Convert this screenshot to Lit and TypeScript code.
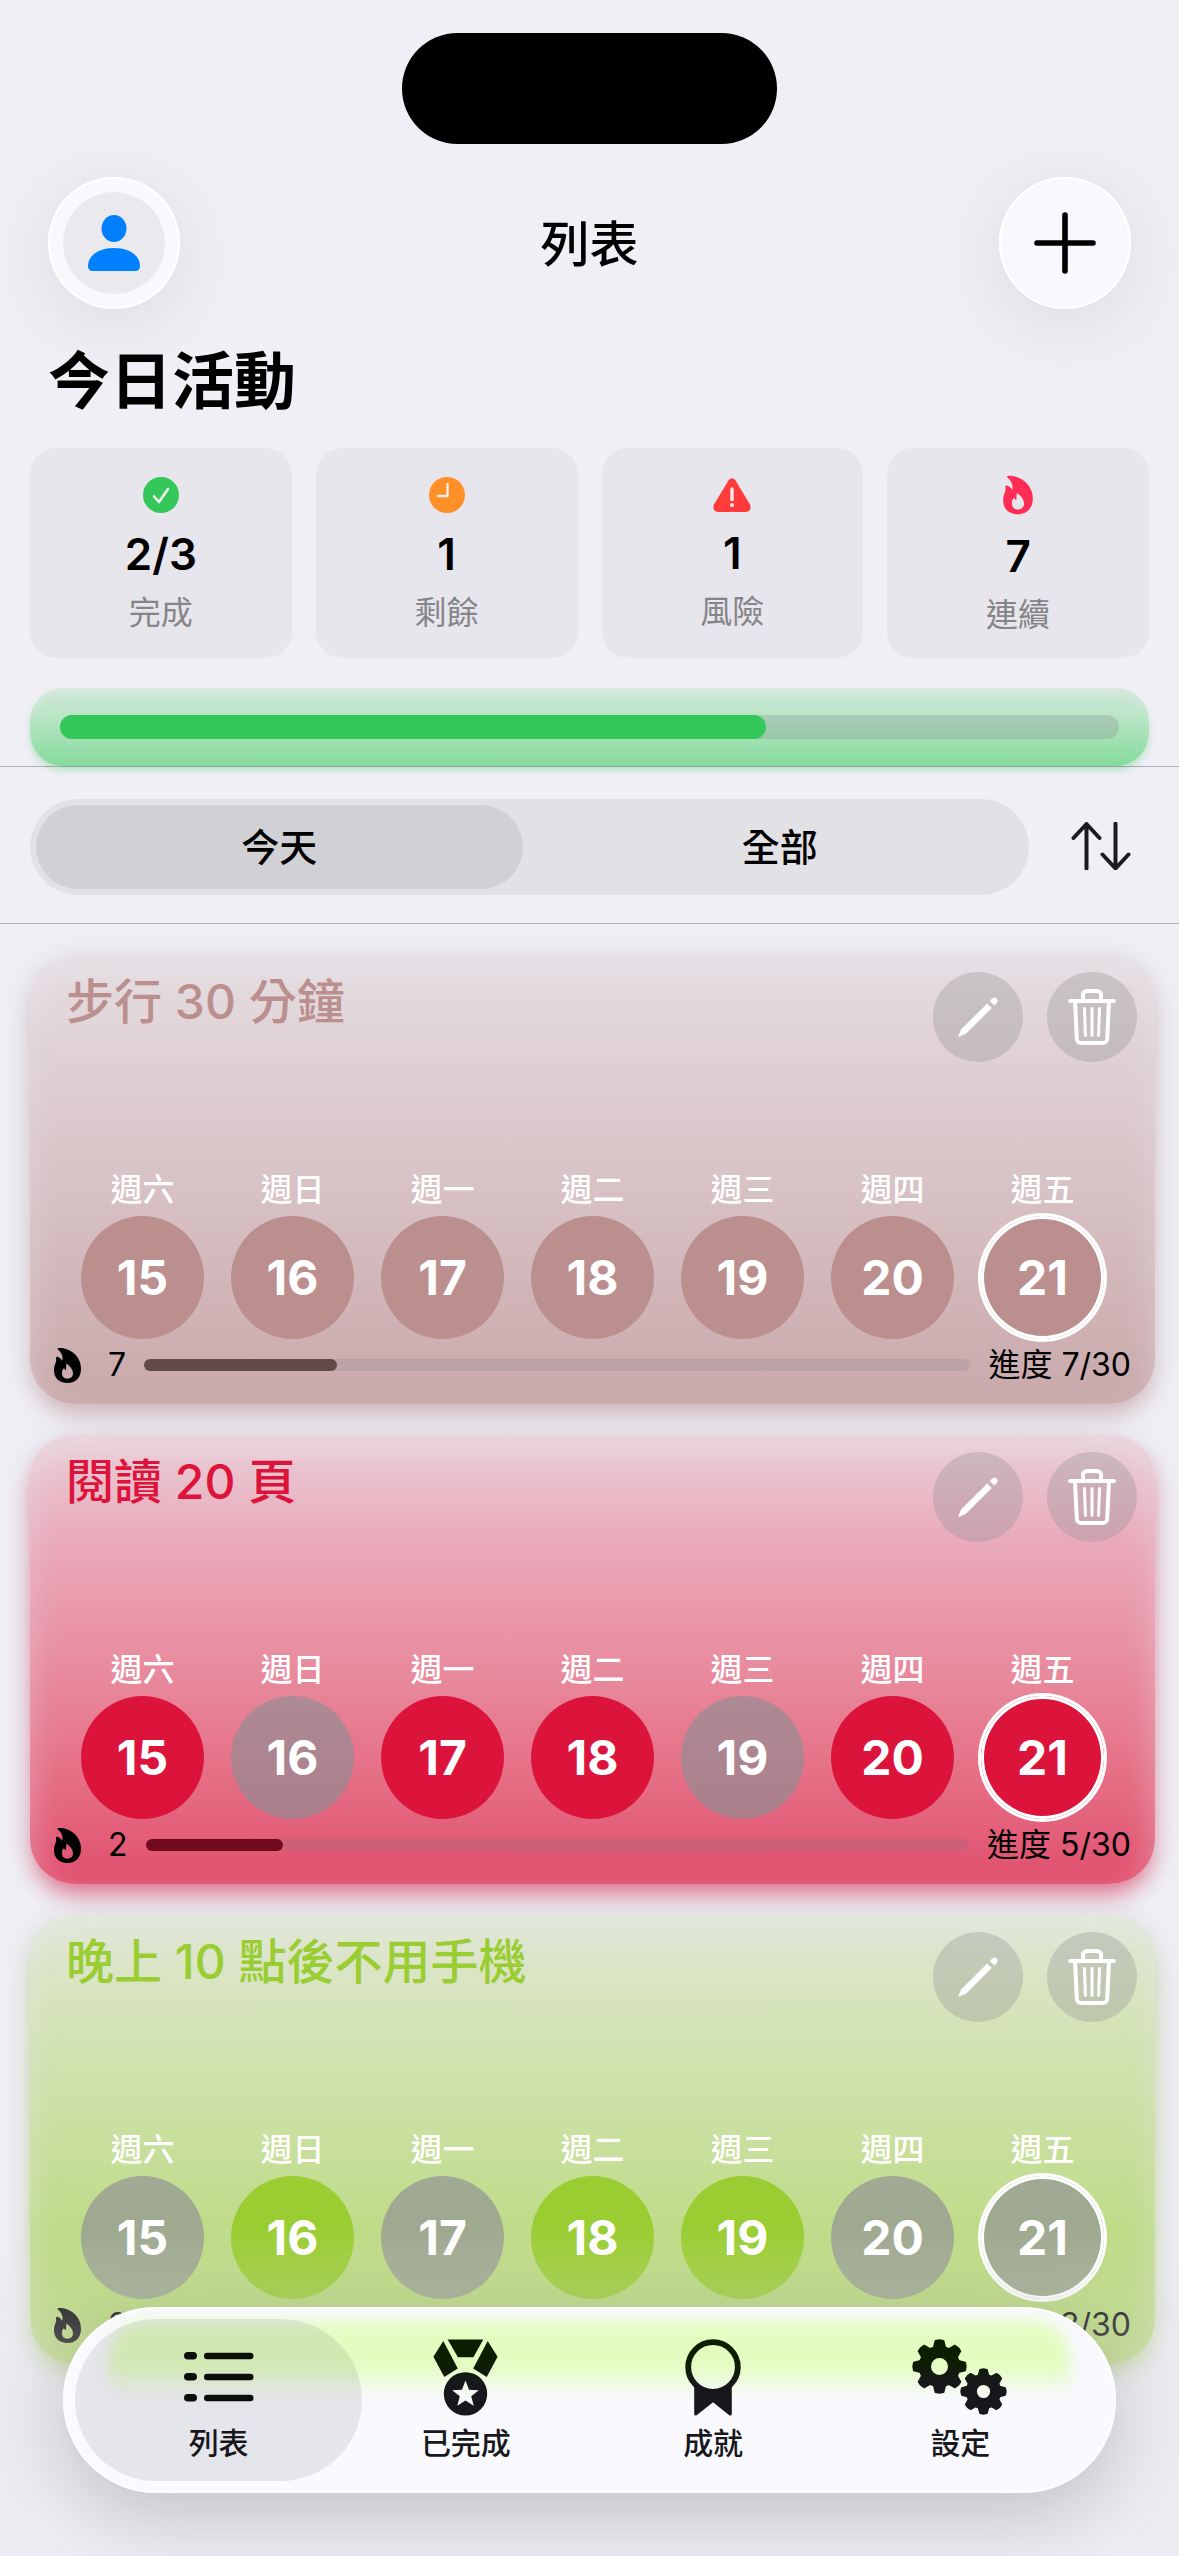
import { LitElement, html, css, svg, nothing } from "lit";
import { customElement, property, state } from "lit/decorators.js";
import { classMap } from "lit/directives/class-map.js";
import { styleMap } from "lit/directives/style-map.js";

interface Habit {
  title: string;
  tint: string;
  streak: number;
  done: number;
  goal: number;
  days: boolean[];
}

const WEEK = [
  { name: "週六", date: 15 },
  { name: "週日", date: 16 },
  { name: "週一", date: 17 },
  { name: "週二", date: 18 },
  { name: "週三", date: 19 },
  { name: "週四", date: 20 },
  { name: "週五", date: 21 },
];

const HABITS: Habit[] = [
  {
    title: "步行 30 分鐘",
    tint: "#bc8f8f",
    streak: 7,
    done: 7,
    goal: 30,
    days: [true, true, true, true, true, true, true],
  },
  {
    title: "閱讀 20 頁",
    tint: "#dc143c",
    streak: 2,
    done: 5,
    goal: 30,
    days: [true, false, true, true, false, true, true],
  },
  {
    title: "晚上 10 點後不用手機",
    tint: "#9acd32",
    streak: 2,
    done: 3,
    goal: 30,
    days: [false, true, false, true, true, false, false],
  },
];

/** Outline of an eight-toothed gear with a round hole. */
function gear(cx: number, cy: number, outer: number, root: number, hole: number): string {
  const at = (r: number, deg: number) => {
    const a = (deg * Math.PI) / 180;
    return `${(cx + r * Math.cos(a)).toFixed(2)} ${(cy + r * Math.sin(a)).toFixed(2)}`;
  };
  const pts: string[] = [];
  for (let i = 0; i < 8; i++) {
    const c = i * 45;
    pts.push(at(root, c - 17), at(outer, c - 9), at(outer + 0.4, c), at(outer, c + 9), at(root, c + 17));
  }
  return (
    `M${pts.join("L")}Z` +
    `M${cx + hole} ${cy}A${hole} ${hole} 0 1 0 ${cx - hole} ${cy}A${hole} ${hole} 0 1 0 ${cx + hole} ${cy}Z`
  );
}

function star(cx: number, cy: number, outer: number, inner: number): string {
  const pts: string[] = [];
  for (let i = 0; i < 10; i++) {
    const r = i % 2 ? inner : outer;
    const a = -Math.PI / 2 + (i * Math.PI) / 5;
    pts.push(`${(cx + r * Math.cos(a)).toFixed(2)} ${(cy + r * Math.sin(a)).toFixed(2)}`);
  }
  return `M${pts.join("L")}Z`;
}

const flamePath = svg`<path fill="currentColor" fill-rule="evenodd"
  d="M12 1C18 -1 30 1 38 4C64 12 81 36 81 62C81 90 63 105 40 105C16 105 0 90 0 67C0 48 9 44 6 31C6 25 12 26 16 29C20 31 23 35 24 39C29 27 22 13 13 6C10 3 10 2 12 1ZM38 47C47 53 57 64 57 76C57 86 50 92 40 92C30 92 24 86 24 76C24 68 26 63 30 61C32 62 32 66 35 67C38 62 35 52 38 47Z"/>`;

const icons = {
  check: html`<svg width="36" height="36" viewBox="0 0 36 36" aria-hidden="true">
    <circle cx="18" cy="18" r="18" fill="#34c759" />
    <path d="M11 19.5L16 25L25 12" fill="none" stroke="#eef3ef" stroke-width="2.6" stroke-linecap="round" stroke-linejoin="round" />
  </svg>`,
  clock: html`<svg width="36" height="36" viewBox="0 0 36 36" aria-hidden="true">
    <circle cx="18" cy="18" r="18" fill="#ff9028" />
    <path d="M18.5 7V19H9" fill="none" stroke="#f3ece8" stroke-width="2.4" stroke-linecap="round" stroke-linejoin="round" />
  </svg>`,
  warning: html`<svg width="38" height="34" viewBox="0 0 38 34" aria-hidden="true">
    <path d="M15.6 2.2Q19 -1.8 22.4 2.2L37 26.5Q39 33.2 33 34H5Q-1 33.2 1 26.5Z" fill="#ff3b3b" />
    <path d="M19 11V21.5" stroke="#f0e8ea" stroke-width="3.4" stroke-linecap="round" />
    <circle cx="19" cy="27" r="2.1" fill="#f0e8ea" />
  </svg>`,
  flame: html`<svg width="30" height="40" viewBox="0 -2 81 109" aria-hidden="true">${flamePath}</svg>`,
  smallFlame: html`<svg width="27" height="35" viewBox="0 0 81 105" aria-hidden="true">${flamePath}</svg>`,
  person: html`<svg width="52" height="56" viewBox="0 0 52 56" aria-hidden="true">
    <ellipse cx="26" cy="13.5" rx="12.5" ry="13.5" fill="#0080ff" />
    <path d="M26 33C42 33 52 41 52 51Q52 56 47 56H5Q0 56 0 51C0 41 10 33 26 33Z" fill="#0080ff" />
  </svg>`,
  plus: html`<svg width="62" height="62" viewBox="0 0 62 62" aria-hidden="true">
    <path d="M31 3V59M3 31H59" stroke="#000" stroke-width="5.6" stroke-linecap="round" />
  </svg>`,
  sort: html`<svg width="60" height="48" viewBox="0 0 60 48" aria-hidden="true">
    <path d="M15.5 46.5V2.5M2.5 16L15.5 2L28.5 16M44.5 1.5V46M31.5 32.5L44.5 46.5L57.5 32.5" fill="none" stroke="#1c1c1e" stroke-width="4" stroke-linecap="round" stroke-linejoin="round" />
  </svg>`,
  pencil: html`<svg width="40" height="40" viewBox="0 0 40 40" aria-hidden="true">
    <path d="M29.2 6.4L33.8 11L8 36.8L1.2 39.8Q0 40 0.3 38.8L3.3 32.2Z" fill="#fff" />
    <path d="M31.8 4Q35.2 -1.4 38.7 1.4Q41.6 4.6 36.2 8.4Z" fill="#fff" />
  </svg>`,
  trash: html`<svg width="48" height="56" viewBox="0 0 48 56" fill="none" stroke="#fff" stroke-linecap="round" stroke-linejoin="round" aria-hidden="true">
    <path d="M2 12H46M15 12V6.5Q15 2 19.5 2H28.5Q33 2 33 6.5V12M7 12L8.8 49.5Q9 54 13.5 54H34.5Q39 54 39.2 49.5L41 12" stroke-width="4" />
    <path d="M16.5 19.5L17.4 46.5M24 19.5V46.5M31.5 19.5L30.6 46.5" stroke-width="3" />
  </svg>`,
  list: html`<svg width="70" height="50" viewBox="0 0 70 50" aria-hidden="true">
    ${[4, 25, 46].map(
      (y) => svg`<rect x="0" y=${y - 4} width="13" height="7.6" rx="3.8" fill="#0a0f0a"/><rect x="20" y=${y - 3.2} width="49.5" height="6.4" rx="3.2" fill="#0a0f0a"/>`,
    )}
  </svg>`,
  medal: html`<svg width="65" height="77" viewBox="0 0 65 77" fill="url(#ink)" aria-hidden="true">
    <defs><linearGradient id="ink" gradientUnits="userSpaceOnUse" x1="0" y1="22" x2="0" y2="44"><stop offset="0" stop-color="#0c1e00" /><stop offset="1" stop-color="#18181c" /></linearGradient></defs>
    <path d="M14.7 0.5H50.3L40.4 18.2H24.9ZM10.3 2L0.4 17.8L11.3 38L24.8 29.6ZM54.7 2L64.6 17.8L53.7 38L40.2 29.6Z" />
    <path fill-rule="evenodd" d="M54.2 54.9A21.7 21.7 0 1 0 10.8 54.9A21.7 21.7 0 1 0 54.2 54.9Z${star(32.5, 55.5, 14, 6)}" />
  </svg>`,
  ribbon: html`<svg width="56" height="77" viewBox="0 0 56 77" aria-hidden="true">
    <defs><linearGradient id="ink2" gradientUnits="userSpaceOnUse" x1="0" y1="22" x2="0" y2="44"><stop offset="0" stop-color="#0c1e00" /><stop offset="1" stop-color="#18181c" /></linearGradient></defs>
    <circle cx="28" cy="28" r="24.8" fill="none" stroke="url(#ink2)" stroke-width="5.8" />
    <path d="M9.2 46Q28 61 46.8 46V75Q46.4 77.4 44 76L28 63.2L12 76Q9.6 77.4 9.2 75Z" fill="#18181c" />
  </svg>`,
  gears: html`<svg width="96" height="77" viewBox="0 0 96 77" aria-hidden="true">
    <defs><linearGradient id="ink3" gradientUnits="userSpaceOnUse" x1="0" y1="22" x2="0" y2="44"><stop offset="0" stop-color="#0c1e00" /><stop offset="1" stop-color="#18181c" /></linearGradient></defs>
    <path d="${gear(27.5, 27.5, 26, 20, 9.3)}${gear(71.5, 52.5, 22, 17, 7.4)}" fill="url(#ink3)" fill-rule="evenodd" stroke="url(#ink3)" stroke-width="1.6" stroke-linejoin="round" />
  </svg>`,
};

const base = css`
  *,
  *::before,
  *::after {
    box-sizing: border-box;
  }
  button {
    font: inherit;
    color: inherit;
    border: 0;
    padding: 0;
    margin: 0;
    background: none;
    cursor: pointer;
  }
  svg {
    display: block;
    flex: none;
  }
`;

@customElement("habit-card")
export class HabitCard extends LitElement {
  @property({ attribute: false }) habit!: Habit;

  static styles = [
    base,
    css`
      :host {
        display: block;
      }
      .card {
        border-radius: 45px;
        padding: 18px 0 15px;
        background: linear-gradient(
          color-mix(in srgb, var(--tint) 13%, #ebeaee),
          color-mix(in srgb, var(--tint) 32%, #efeef4) 25%,
          color-mix(in srgb, var(--tint) 73%, #efeef4)
        );
        box-shadow:
          0 14px 24px -6px color-mix(in srgb, var(--tint) 60%, transparent),
          0 4px 36px rgba(0, 0, 0, 0.08),
          inset 0 14px 32px rgba(236, 236, 244, 0.4);
      }
      .top {
        display: flex;
        align-items: flex-start;
        gap: 24px;
        padding: 0 18px 0 36px;
      }
      .title {
        flex: 1;
        margin: 0;
        font-size: 48px;
        line-height: 60px;
        font-weight: 500;
        color: var(--tint);
      }
      .action {
        width: 90px;
        height: 90px;
        border-radius: 50%;
        background: rgba(142, 142, 147, 0.32);
        display: grid;
        place-items: center;
      }
      .week {
        list-style: none;
        margin: 108px 0 0;
        padding: 0 51px;
        display: flex;
        justify-content: space-between;
        color: #fff;
      }
      .day {
        display: flex;
        flex-direction: column;
        align-items: center;
        gap: 6px;
      }
      .name {
        font-size: 32px;
        line-height: 40px;
        font-weight: 500;
      }
      .date {
        width: 123px;
        height: 123px;
        border-radius: 50%;
        background: rgba(142, 142, 147, 0.65);
        display: grid;
        place-items: center;
        font-size: 48px;
        font-weight: 700;
      }
      .date.done {
        background: var(--tint);
      }
      .date.today {
        box-shadow:
          0 0 0 3px #fff,
          inset 0 0 0 3px #fff;
      }
      .foot {
        display: flex;
        align-items: center;
        gap: 18px;
        margin-top: 2px;
        padding: 0 24px;
        font-size: 32px;
        line-height: 48px;
        color: #000;
      }
      .streak {
        display: flex;
        align-items: center;
        gap: 27px;
      }
      .track {
        flex: 1;
        height: 12px;
        border-radius: 6px;
        background: rgba(120, 120, 128, 0.2);
      }
      .fill {
        height: 100%;
        border-radius: 6px;
        background: color-mix(in srgb, var(--tint) 52%, #000);
      }
    `,
  ];

  render() {
    const h = this.habit;
    return html`<article class="card" style=${styleMap({ "--tint": h.tint })}>
      <header class="top">
        <h2 class="title">${h.title}</h2>
        <button class="action" aria-label="編輯">${icons.pencil}</button>
        <button class="action" aria-label="刪除">${icons.trash}</button>
      </header>
      <ul class="week">
        ${WEEK.map(
          (d, i) => html`<li class="day">
            <span class="name">${d.name}</span>
            <span class=${classMap({ date: true, done: h.days[i], today: i === WEEK.length - 1 })}>${d.date}</span>
          </li>`,
        )}
      </ul>
      <footer class="foot">
        <span class="streak">${icons.smallFlame}<span>${h.streak}</span></span>
        <div class="track"><div class="fill" style=${styleMap({ width: `${(h.done / h.goal) * 100}%` })}></div></div>
        <span>進度 ${h.done}/${h.goal}</span>
      </footer>
    </article>`;
  }
}

@customElement("app-root")
export class AppRoot extends LitElement {
  @state() private scope = "今天";
  @state() private tab = "列表";

  static styles = [
    base,
    css`
      :host {
        display: block;
        position: relative;
        min-height: 100vh;
        overflow: hidden;
        background: #f0eff6;
        color: #000;
        font-family: Inter, "Noto Sans CJK TC", sans-serif;
      }
      .island {
        width: 375px;
        height: 111px;
        margin: 33px auto 0;
        border-radius: 56px;
        background: #000;
      }
      .bar {
        display: grid;
        grid-template-columns: 132px 1fr 132px;
        align-items: center;
        margin-top: 33px;
        padding: 0 48px;
      }
      .screen-title {
        margin: 0;
        padding-top: 4px;
        text-align: center;
        font-size: 49px;
        line-height: 60px;
        font-weight: 500;
      }
      .round {
        width: 132px;
        height: 132px;
        border-radius: 50%;
        background: #f9f9fd;
        box-shadow:
          0 14px 80px rgba(0, 0, 0, 0.09),
          inset 0 0 0 2px #fff;
        display: grid;
        place-items: center;
      }
      .avatar {
        width: 102px;
        height: 102px;
        border-radius: 50%;
        background: #e9e9ee;
        display: grid;
        place-items: center;
      }
      .heading {
        margin: 33px 48px 27px;
        font-size: 62px;
        line-height: 79px;
        font-weight: 700;
      }
      .stats {
        display: grid;
        grid-template-columns: repeat(4, 1fr);
        gap: 24px;
        margin: 0 30px;
      }
      .stat {
        height: 210px;
        padding-top: 3px;
        border-radius: 26px;
        background: #e7e6ec;
        display: flex;
        flex-direction: column;
        align-items: center;
        justify-content: center;
      }
      .value {
        margin-top: 14px;
        font-size: 44px;
        line-height: 54px;
        font-weight: 600;
      }
      .label {
        margin-top: 12px;
        font-size: 32px;
        line-height: 40px;
        color: #858589;
      }
      .rose {
        color: #ff2d55;
      }
      .overall {
        margin: 30px 30px 0;
        padding: 27px 30px;
        border-radius: 33px;
        background: linear-gradient(#cfe8d8, #bbe5c7 35%, #85db9c);
        box-shadow:
          0 5px 9px -2px rgba(52, 199, 89, 0.4),
          inset 0 6px 9px -3px rgba(228, 232, 232, 0.7);
      }
      .overall-track {
        height: 24px;
        border-radius: 12px;
        background: rgba(120, 120, 128, 0.24);
      }
      .overall-fill {
        height: 100%;
        border-radius: 12px;
        background: #34c759;
      }
      .filter {
        display: flex;
        align-items: center;
        gap: 24px;
        padding: 32px 30px 28px;
        border-top: 1px solid rgba(60, 60, 67, 0.36);
        border-bottom: 1px solid rgba(60, 60, 67, 0.36);
      }
      .segments {
        flex: 1;
        display: flex;
        gap: 14px;
        padding: 6px;
        border-radius: 48px;
        background: #e2e1e6;
      }
      .segment {
        flex: 1;
        height: 84px;
        padding-bottom: 5px;
        border-radius: 42px;
        font-size: 38px;
        font-weight: 500;
      }
      .segment.on {
        background: #d1d0d5;
      }
      .sort {
        width: 96px;
        height: 96px;
        padding-bottom: 2px;
        display: grid;
        place-items: center;
      }
      .cards {
        display: flex;
        flex-direction: column;
        gap: 30px;
        padding: 30px 24px 192px 30px;
      }
      .fade {
        position: absolute;
        inset: auto 0 0;
        height: 330px;
        pointer-events: none;
        background: linear-gradient(
          rgba(232, 232, 238, 0),
          rgba(225, 225, 232, 0.3) 30%,
          rgba(228, 228, 234, 0.5) 50%,
          rgba(235, 235, 240, 0.8)
        );
      }
      .tabs {
        position: absolute;
        left: 63px;
        right: 63px;
        bottom: 63px;
        height: 186px;
        padding: 12px 32px;
        display: grid;
        grid-template-columns: repeat(4, 1fr);
        border-radius: 93px;
        background: #f9f9fe;
        box-shadow:
          0 24px 70px rgba(0, 0, 0, 0.17),
          inset 0 0 0 2px #fdfdff;
        isolation: isolate;
      }
      .tabs::before {
        content: "";
        position: absolute;
        z-index: -1;
        inset: 14px 46px 96px;
        border-radius: 36px 36px 0 0;
        background: linear-gradient(#e3fcc0 60%, rgba(240, 251, 224, 0));
        filter: blur(7px);
      }
      .tab {
        position: relative;
        display: flex;
        flex-direction: column;
        align-items: center;
        color: #18181c;
        font-size: 30px;
        line-height: 40px;
        font-weight: 500;
      }
      .tab.on::before {
        content: "";
        position: absolute;
        z-index: -1;
        inset: 0 -20px;
        border-radius: 81px;
        background: rgba(20, 20, 50, 0.085);
      }
      .glyph {
        height: 104px;
        padding-top: 12px;
        display: grid;
        place-items: center;
      }
    `,
  ];

  render() {
    const stats = [
      { icon: icons.check, value: "2/3", label: "完成" },
      { icon: icons.clock, value: "1", label: "剩餘" },
      { icon: icons.warning, value: "1", label: "風險" },
      { icon: html`<span class="rose">${icons.flame}</span>`, value: "7", label: "連續" },
    ];
    const tabs = [
      { icon: icons.list, label: "列表" },
      { icon: icons.medal, label: "已完成" },
      { icon: icons.ribbon, label: "成就" },
      { icon: icons.gears, label: "設定" },
    ];
    return html`
      <div class="island"></div>
      <header class="bar">
        <button class="round" aria-label="個人檔案"><span class="avatar">${icons.person}</span></button>
        <h1 class="screen-title">列表</h1>
        <button class="round" aria-label="新增">${icons.plus}</button>
      </header>
      <h2 class="heading">今日活動</h2>
      <section class="stats">
        ${stats.map(
          (s) => html`<div class="stat">${s.icon}<span class="value">${s.value}</span><span class="label">${s.label}</span></div>`,
        )}
      </section>
      <div class="overall">
        <div class="overall-track"><div class="overall-fill" style=${styleMap({ width: `${(2 / 3) * 100}%` })}></div></div>
      </div>
      <div class="filter">
        <div class="segments">
          ${["今天", "全部"].map(
            (s) => html`<button
              class=${classMap({ segment: true, on: this.scope === s })}
              aria-pressed=${this.scope === s}
              @click=${() => (this.scope = s)}
            >${s}</button>`,
          )}
        </div>
        <button class="sort" aria-label="排序">${icons.sort}</button>
      </div>
      <main class="cards">${HABITS.map((h) => html`<habit-card .habit=${h}></habit-card>`)}</main>
      <div class="fade"></div>
      <nav class="tabs">
        ${tabs.map(
          (t) => html`<button
            class=${classMap({ tab: true, on: this.tab === t.label })}
            aria-current=${this.tab === t.label ? "page" : nothing}
            @click=${() => (this.tab = t.label)}
          ><span class="glyph">${t.icon}</span>${t.label}</button>`,
        )}
      </nav>
    `;
  }
}
